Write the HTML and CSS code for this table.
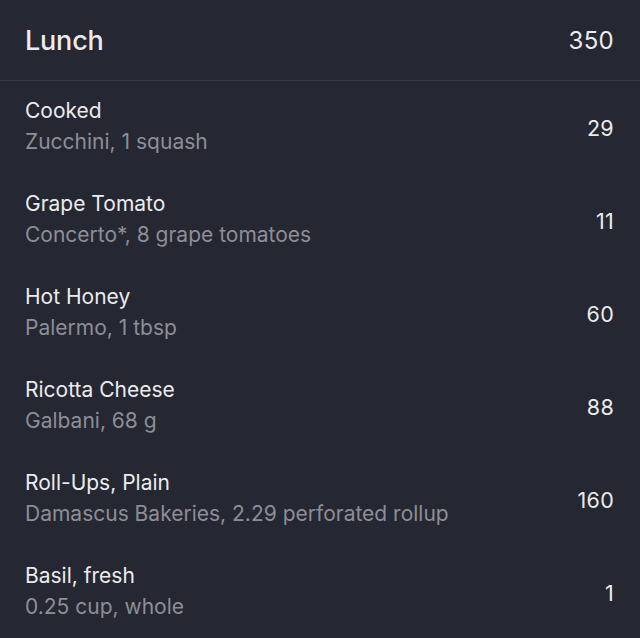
FILE: index.html
```html
<!DOCTYPE html>
<html>
<head>
<meta charset="utf-8">
<link rel="stylesheet" href="styles.css">
</head>
<body>
<div class="card">
  <div class="header">
    <span class="meal">Lunch</span>
    <span class="total">350</span>
  </div>
  <div class="list">
    <div class="row"><div class="info"><div class="name">Cooked</div><div class="detail">Zucchini, 1 squash</div></div><div class="cal">29</div></div>
    <div class="row"><div class="info"><div class="name">Grape Tomato</div><div class="detail">Concerto*, 8 grape tomatoes</div></div><div class="cal">11</div></div>
    <div class="row"><div class="info"><div class="name">Hot Honey</div><div class="detail">Palermo, 1 tbsp</div></div><div class="cal">60</div></div>
    <div class="row"><div class="info"><div class="name">Ricotta Cheese</div><div class="detail">Galbani, 68 g</div></div><div class="cal">88</div></div>
    <div class="row"><div class="info"><div class="name">Roll-Ups, Plain</div><div class="detail">Damascus Bakeries, 2.29 perforated rollup</div></div><div class="cal">160</div></div>
    <div class="row"><div class="info"><div class="name">Basil, fresh</div><div class="detail">0.25 cup, whole</div></div><div class="cal">1</div></div>
  </div>
</div>
</body>
</html>
```
FILE: styles.css
```css
html, body {
  margin: 0;
  padding: 0;
  background: #252732;
}
body {
  font-family: Inter, "Noto Sans", sans-serif;
  color: #ebebef;
}
.card {
  width: 640px;
  height: 638px;
  overflow: hidden;
}
.header {
  height: 81px;
  display: flex;
  align-items: center;
  justify-content: space-between;
  padding: 0 26px 0 25px;
  border-bottom: 1px solid #363844;
  box-sizing: border-box;
}
.meal {
  font-size: 27px;
  font-weight: 500;
  letter-spacing: -0.2px;
}
.total {
  font-size: 24px;
  font-weight: 400;
  letter-spacing: 0.3px;
}
.row {
  height: 93px;
  display: flex;
  align-items: center;
  justify-content: space-between;
  padding: 0 26px 0 25px;
  box-sizing: border-box;
}
.info {
  display: flex;
  flex-direction: column;
  margin-top: -2px;
}
.name {
  font-size: 21px;
  line-height: 30px;
  color: #ebebef;
}
.detail {
  font-size: 21px;
  line-height: 32px;
  color: #8d8e97;
}
.cal {
  font-size: 21.5px;
  letter-spacing: 0.3px;
  color: #ebebef;
}
```
